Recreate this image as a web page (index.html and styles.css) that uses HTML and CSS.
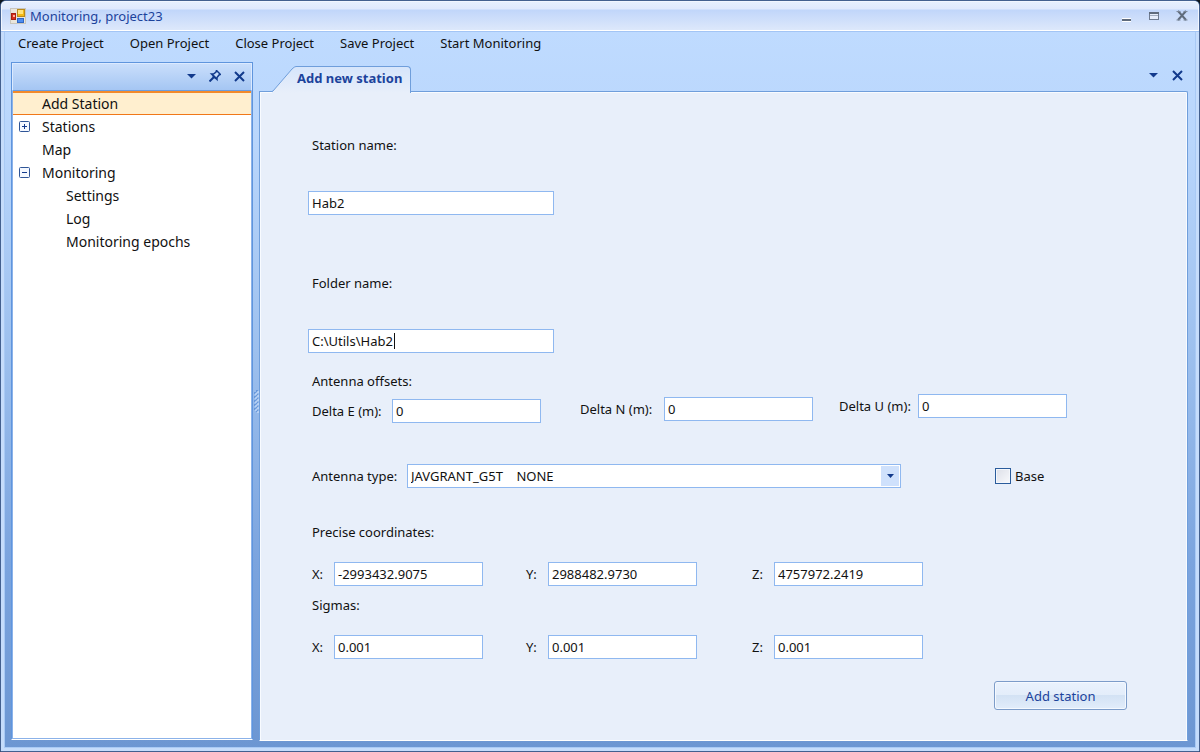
FILE: index.html
```html
<!DOCTYPE html>
<html lang="en">
<head>
    <meta charset="utf-8">
    <title>Monitoring, project23</title>
    <link rel="stylesheet" href="styles.css">
</head>
<body>
<div class="window">
    <header class="titlebar">
        <svg class="app-icon" width="16" height="16" viewBox="0 0 16 16">
            <rect x="0.5" y="0.5" width="15" height="15" fill="#e9e6dc" stroke="#c9c6bd"/>
            <rect x="7.500" y="1.500" width="7" height="7" fill="#f5b914" stroke="#b98a1c"/>
            <rect x="8" y="2" width="5" height="4" fill="#ffe27a"/>
            <rect x="1.500" y="5.500" width="4" height="6" fill="#d8301c" stroke="#a51f12"/>
            <rect x="3" y="7" width="2" height="2" fill="#ffb09c"/>
            <rect x="7.500" y="10.500" width="6" height="4" fill="#4d8df0" stroke="#2f66c4"/>
        </svg>
        <h1 class="title">Monitoring, project23</h1>
        <div class="window-buttons">
            <button type="button" aria-label="Minimize">
                <svg width="12" height="12" viewBox="0 0 12 12"><path d="M2 10h9" stroke="#fff" stroke-width="4"/><path d="M2 10h9" stroke="#5f6b7c" stroke-width="2"/></svg>
            </button>
            <button type="button" aria-label="Maximize">
                <svg width="12" height="12" viewBox="0 0 12 12"><rect x="1.500" y="2.500" width="9" height="7" fill="#e6edfb" stroke="#6e7b90"/><path d="M1 3h10" stroke="#5f6b7c" stroke-width="2"/><path d="M2 5.500h8" stroke="#a3aec0"/></svg>
            </button>
            <button type="button" aria-label="Close">
                <svg width="12" height="12" viewBox="0 0 12 12"><path d="M2 1l8 9M10 1l-8 9" stroke="#5f6b7c" stroke-width="2"/><path d="M0.500 1.500h4M7.500 1.500h4M0.500 10h4M7.500 10h4" stroke="#7b879a"/></svg>
            </button>
        </div>
    </header>

    <nav class="menu">
        <a href="#">Create Project</a>
        <a href="#">Open Project</a>
        <a href="#">Close Project</a>
        <a href="#">Save Project</a>
        <a href="#">Start Monitoring</a>
    </nav>

    <div class="workspace">
        <aside class="sidebar">
            <div class="sidebar-head">
                <button type="button" aria-label="Window position">
                    <svg width="12" height="12" viewBox="0 0 12 12"><path d="M2 4h9L6.500 8.500z" fill="#123a8c"/></svg>
                </button>
                <button type="button" aria-label="Auto hide">
                    <svg width="12" height="12" viewBox="0 0 12 12"><path d="M7.500 0.500l4 4L10 5L8 7.500V9.500L2.500 4h2L7 2z" fill="#c6dcfa" stroke="#123a8c" stroke-width="1.500"/><path d="M5 7L0.500 11.500" stroke="#123a8c" stroke-width="2"/><path d="M4 5.500L7 8.500" stroke="#123a8c" stroke-width="2"/></svg>
                </button>
                <button type="button" aria-label="Close panel">
                    <svg width="12" height="12" viewBox="0 0 12 12"><path d="M2 2l9 9M11 2l-9 9" stroke="#123a8c" stroke-width="2"/></svg>
                </button>
            </div>
            <ul class="tree">
                <li><div class="node selected"><a href="#">Add Station</a></div></li>
                <li>
                    <div class="node">
                        <button type="button" class="toggle" aria-label="Expand">
                            <svg width="12" height="12" viewBox="0 0 12 12"><rect x="0.500" y="0.500" width="10" height="10" rx="1" fill="#f4f8ff" stroke="#2f5597"/><path d="M3 5.500h5M5.500 3v5" stroke="#123a8c"/></svg>
                        </button>
                        <a href="#">Stations</a>
                    </div>
                </li>
                <li><div class="node"><a href="#">Map</a></div></li>
                <li>
                    <div class="node">
                        <button type="button" class="toggle" aria-label="Collapse">
                            <svg width="12" height="12" viewBox="0 0 12 12"><rect x="0.500" y="0.500" width="10" height="10" rx="1" fill="#f4f8ff" stroke="#2f5597"/><path d="M3 5.500h5" stroke="#123a8c"/></svg>
                        </button>
                        <a href="#">Monitoring</a>
                    </div>
                    <ul class="subtree">
                        <li><div class="node"><a href="#">Settings</a></div></li>
                        <li><div class="node"><a href="#">Log</a></div></li>
                        <li><div class="node"><a href="#">Monitoring epochs</a></div></li>
                    </ul>
                </li>
            </ul>
        </aside>

        <div class="splitter">
            <svg width="6" height="26" viewBox="0 0 6 26"><path d="M3 2h2M1 4h2M3 6h2M1 8h2M3 10h2M1 12h2M3 14h2M1 16h2M3 18h2M1 20h2M3 22h2" stroke="#3f78cc" stroke-width="1"/><path d="M4 3h2M2 5h2M4 7h2M2 9h2M4 11h2M2 13h2M4 15h2M2 17h2M4 19h2M2 21h2M4 23h2" stroke="#dcebff" stroke-width="1"/></svg>
        </div>

        <main class="document">
            <div class="tabs">
                <div class="tab">
                    <svg class="tab-slope" width="24" height="27" viewBox="0 0 24 27">
                        <defs>
                            <linearGradient id="tabFill" x1="0" y1="0" x2="0" y2="1">
                                <stop offset="0" stop-color="#d6e5fb"/>
                                <stop offset="1" stop-color="#e8effa"/>
                            </linearGradient>
                        </defs>
                        <path d="M0 27V26L20 3Q22 0.500 24 0.500V27z" fill="url(#tabFill)"/>
                        <path d="M0 25.500L1 25L20 3Q22.500 0.500 24 0.500" fill="none" stroke="#6f9edb"/>
                    </svg>
                    <a class="tab-label" href="#">Add new station</a>
                </div>
                <div class="tab-buttons">
                    <button type="button" aria-label="Open documents">
                        <svg width="12" height="12" viewBox="0 0 12 12"><path d="M2 4h9L6.500 8.500z" fill="#123a8c"/></svg>
                    </button>
                    <button type="button" aria-label="Close document">
                        <svg width="12" height="12" viewBox="0 0 12 12"><path d="M2 2l9 9M11 2l-9 9" stroke="#123a8c" stroke-width="2"/></svg>
                    </button>
                </div>
            </div>

            <form class="station-form">
                <div class="field-block">
                    <label for="stationName">Station name:</label>
                    <input class="text-box wide" type="text" id="stationName" value="Hab2">
                </div>

                <div class="field-block">
                    <label for="folderName">Folder name:</label>
                    <div class="caret-box">
                        <input class="text-box wide" type="text" id="folderName" value="C:\Utils\Hab2">
                        <span class="caret"></span>
                    </div>
                </div>

                <fieldset class="offsets">
                    <legend>Antenna offsets:</legend>
                    <div class="offset-row">
                        <div class="field offset-e">
                            <label for="deltaE">Delta E (m):</label>
                            <input class="text-box" type="text" id="deltaE" value="0">
                        </div>
                        <div class="field offset-n">
                            <label for="deltaN">Delta N (m):</label>
                            <input class="text-box" type="text" id="deltaN" value="0">
                        </div>
                        <div class="field offset-u">
                            <label for="deltaU">Delta U (m):</label>
                            <input class="text-box" type="text" id="deltaU" value="0">
                        </div>
                    </div>
                </fieldset>

                <div class="antenna-row">
                    <label for="antennaType">Antenna type:</label>
                    <select class="antenna" id="antennaType">
                        <option>JAVGRANT_G5T&nbsp;&nbsp;&nbsp;&nbsp;NONE</option>
                    </select>
                    <div class="base">
                        <input type="checkbox" id="base">
                        <label for="base">Base</label>
                    </div>
                </div>

                <fieldset class="coords">
                    <legend>Precise coordinates:</legend>
                    <div class="coord-row">
                        <label for="coordX">X:</label>
                        <input class="text-box" type="text" id="coordX" value="-2993432.9075">
                        <label for="coordY">Y:</label>
                        <input class="text-box" type="text" id="coordY" value="2988482.9730">
                        <label for="coordZ">Z:</label>
                        <input class="text-box" type="text" id="coordZ" value="4757972.2419">
                    </div>
                </fieldset>

                <fieldset class="sigmas">
                    <legend>Sigmas:</legend>
                    <div class="coord-row">
                        <label for="sigmaX">X:</label>
                        <input class="text-box" type="text" id="sigmaX" value="0.001">
                        <label for="sigmaY">Y:</label>
                        <input class="text-box" type="text" id="sigmaY" value="0.001">
                        <label for="sigmaZ">Z:</label>
                        <input class="text-box" type="text" id="sigmaZ" value="0.001">
                    </div>
                </fieldset>

                <div class="actions">
                    <button type="button" class="add-button">Add station</button>
                </div>
            </form>
        </main>
    </div>
</div>
</body>
</html>
```
FILE: styles.css
```css
* {
    box-sizing: border-box;
}
body {
    margin: 0;
    background: #101820;
    font-family: "Noto Sans", "Open Sans", sans-serif;
    font-size: 13px;
    line-height: 18px;
    color: #111;
}
a {
    color: inherit;
    text-decoration: none;
}
button {
    padding: 0;
    border: 0;
    background: none;
    font: inherit;
}
svg {
    display: block;
}

/* window frame */
.window {
    display: flex;
    flex-direction: column;
    min-height: 100vh;
    border: 1px solid #43608f;
    border-radius: 6px 6px 0 0;
    box-shadow: inset 0 0 0 3px #c5dcfb, inset 0 0 0 4px #a9caf5;
    background: linear-gradient(#bfdbff 30px, #b9d6fc 140px, #9dc0ee 350px, #7ba4de 560px, #6c96d2);
}
.titlebar {
    display: flex;
    align-items: center;
    height: 30px;
    padding: 0 10px 0 8px;
    border: 1px solid #f1f6ff;
    border-bottom-color: #fff;
    border-radius: 5px 5px 0 0;
    background: linear-gradient(#e6effe 0, #dfe9fd 7px, #c1d6fa 8px, #dde8fb 28px);
    box-shadow: 0 1px #a3c5f5;
}
.title {
    flex: 1;
    margin: 0 0 0 4px;
    font-size: 13px;
    font-weight: normal;
    color: #1c439c;
}
.window-buttons {
    display: flex;
    gap: 16px;
}
.menu {
    display: flex;
    gap: 26px;
    height: 31px;
    padding: 3px 17px;
}

/* workspace */
.workspace {
    display: flex;
    flex: 1;
    padding: 0 11px 10px 10px;
}
.sidebar {
    display: flex;
    flex-direction: column;
    width: 242px;
    margin-bottom: 1px;
    border: 1px solid #5f95dd;
    border-bottom-color: #fff;
    background: #fff;
    box-shadow: inset 1px 0 #8bb2e9, inset -1px 0 #8bb2e9, inset 0 -1px #8bb2e9;
}
.sidebar-head {
    display: flex;
    align-items: center;
    justify-content: flex-end;
    gap: 12px;
    height: 28px;
    padding: 0 6px 2px;
    border: 1px solid #dceaff;
    border-bottom-color: #6a9ce0;
    background: linear-gradient(#c9defb, #a5c6f3);
}
.tree,
.subtree {
    margin: 0;
    padding: 0;
    list-style: none;
}
.tree {
    padding: 0 1px;
    font-size: 14px;
}
.node {
    display: flex;
    align-items: center;
    height: 23px;
    padding-left: 29px;
}
.subtree .node {
    padding-left: 53px;
}
.node.selected {
    height: 24px;
    border-top: 2px solid #f28a2b;
    border-bottom: 1px solid #f07818;
    background: #ffefcf;
}
.toggle {
    width: 12px;
    margin-left: -23px;
    margin-right: 11px;
}
.splitter {
    display: flex;
    align-items: center;
    width: 6px;
}

/* document area */
.document {
    display: flex;
    flex: 1;
    flex-direction: column;
    min-width: 0;
}
.tabs {
    display: flex;
    justify-content: space-between;
    height: 29px;
    padding: 4px 5px 0 13px;
}
.tab {
    display: flex;
    height: 27px;
    z-index: 1;
}
.tab-label {
    padding: 2px 8px 0 1px;
    border-top: 1px solid #6f9edb;
    border-right: 1px solid #6f9edb;
    border-radius: 0 4px 0 0;
    background: linear-gradient(#d6e5fb, #e8effa);
    font-weight: bold;
    color: #1c439c;
}
.tab-buttons {
    display: flex;
    gap: 12px;
    height: 18px;
}
.station-form {
    flex: 1;
    padding: 44px 20px 28px 52px;
    border: 1px solid #6f9edb;
    border-bottom-color: #fff;
    border-radius: 0 2px 0 0;
    background: #e8effa;
    box-shadow: inset 1px 1px #f8fbff, inset -1px 0 #f8fbff;
}
.text-box,
.antenna {
    width: 149px;
    height: 24px;
    margin: 0;
    padding: 0 3px;
    border: 1px solid #8fb8f0;
    border-radius: 0;
    outline: 0;
    background: #fff;
    font: inherit;
    color: #111;
}
.text-box.wide {
    width: 246px;
}
.field-block {
    display: flex;
    flex-direction: column;
    align-items: flex-start;
    gap: 37px;
    margin-bottom: 59px;
}
.field-block .wide {
    display: block;
    margin-left: -4px;
}
.field-block + .field-block {
    margin-bottom: 19px;
}
.caret-box {
    position: relative;
}
.caret {
    position: absolute;
    top: 4px;
    left: 82px;
    width: 1px;
    height: 16px;
    background: #111;
}
fieldset {
    min-width: 0;
    margin: 0;
    padding: 0;
    border: 0;
}
legend {
    padding: 0;
}

/* the three offset boxes step up from left to right */
.offset-row {
    display: grid;
    grid-template-columns: 268px 259px auto;
    height: 29px;
    margin-top: 4px;
}
.field {
    display: grid;
    align-items: center;
    height: 24px;
}
.offset-e {
    grid-template-columns: 80px 149px;
    align-self: end;
}
.offset-n {
    grid-template-columns: 84px 149px;
    align-self: center;
}
.offset-u {
    grid-template-columns: 79px 149px;
    align-self: start;
}
.antenna-row {
    display: flex;
    align-items: center;
    margin-top: 41px;
}
.antenna-row > label {
    width: 95px;
}
.antenna {
    appearance: none;
    width: 494px;
    background: url("data:image/svg+xml,%3Csvg xmlns='http://www.w3.org/2000/svg' width='18' height='20'%3E%3Crect width='18' height='20' fill='%23cfe1fc'/%3E%3Cpath d='M6 8h7L9.500 12z' fill='%23123a8c'/%3E%3C/svg%3E") no-repeat right 1px center #fff;
}
.base {
    display: flex;
    align-items: center;
    gap: 4px;
    margin-left: 94px;
}
.base input {
    appearance: none;
    width: 16px;
    height: 16px;
    margin: 0;
    border: 1px solid #2a5c9c;
    background: linear-gradient(135deg, #dcdfe8, #f8f9fc);
    box-shadow: inset 0 0 0 1px #f4f7fc;
}
.coords {
    margin-top: 35px;
}
.sigmas {
    margin-top: 10px;
}
.coord-row {
    display: grid;
    grid-template-columns: 22px 192px 22px 204px 22px 149px;
    align-items: center;
    margin-top: 21px;
}
.actions {
    display: flex;
    justify-content: flex-end;
    margin-top: 22px;
    padding-right: 40px;
}
.add-button {
    width: 133px;
    height: 29px;
    border: 1px solid #7c9cc9;
    border-radius: 3px;
    background: linear-gradient(#eaf2fd 0, #e3edfa 48%, #d3e2f4 50%, #e2edfb 100%);
    box-shadow: inset 0 0 0 1px #f5f9ff;
    color: #1c439c;
}
```
